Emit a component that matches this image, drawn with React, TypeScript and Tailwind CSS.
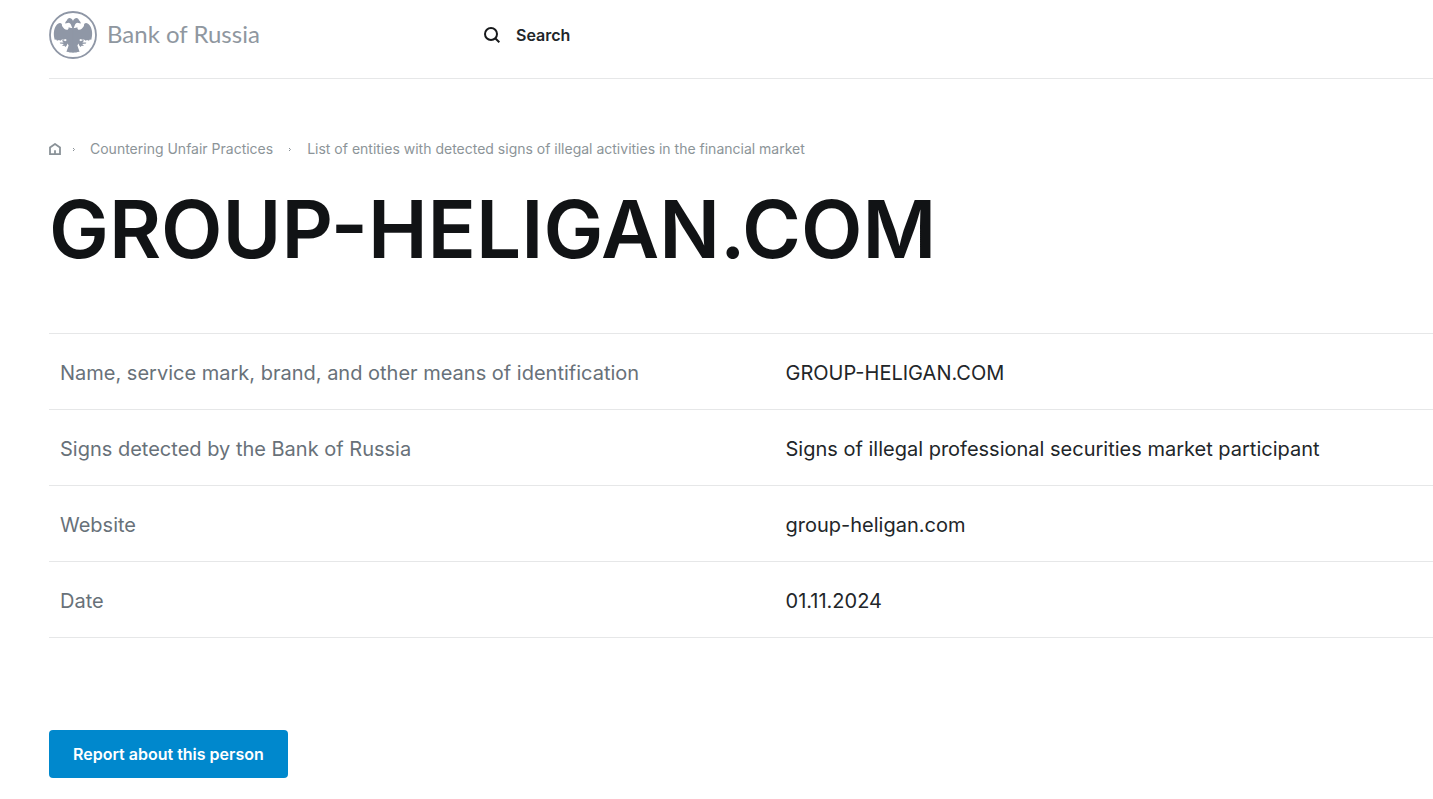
import React from "react";

const rows = [
  { label: "Name, service mark, brand, and other means of identification", value: "GROUP-HELIGAN.COM" },
  { label: "Signs detected by the Bank of Russia", value: "Signs of illegal professional securities market participant" },
  { label: "Website", value: "group-heligan.com" },
  { label: "Date", value: "01.11.2024" },
];

function Emblem() {
  const wing =
    "M24 17.2 L22.6 15.4 C22 13.6 21.4 12.2 19.8 11.8 L16.2 12.6 C16.2 11 17 10 18 9.2 C18.6 7.6 20 6.8 21.4 7.2 C23 7.6 23.8 8.8 24 10.4 L24 41.8 L22.4 41.4 L20.8 41.6 L19.4 41 L17.4 40.8 L18.6 37.6 L19.6 34.6 L18.6 32.6 L17.6 34.8 L16.4 36 L15.4 34.8 L13 35 L14.8 33 L11 32.6 L10.8 31.6 L14.6 31.4 L13 29.8 L14 29 L16.4 30.2 L17.8 29 L16.4 28 L14.6 28.8 L13 28.6 L11.4 29.8 L10 29 L8 29.8 L7.2 28.6 L5.7 28.8 C4.4 24 4.4 18.4 7.2 14.6 C8.6 12.4 11.2 11.2 12.6 12.8 C13.2 13.6 12.6 14.4 13.4 15.6 C14.2 17 16 18.8 17.8 18.8 C19.2 18.8 19.8 17.6 19.6 16.2 L21 16.8 Z";
  return (
    <svg className="size-12" viewBox="0 0 48 48" fill="#8f97a6" aria-hidden="true">
      <circle cx="24" cy="24" r="23" fill="none" stroke="#8f97a6" strokeWidth="1.8" />
      <path d={wing} />
      <path d={wing} transform="translate(48 0) scale(-1 1)" />
      <path d="M23.2 14h1.6v27h-1.6z" />
    </svg>
  );
}

function Chevron() {
  return (
    <svg className="h-[5px] w-1 shrink-0" viewBox="0 0 4 5" fill="none" stroke="#8a9298" aria-hidden="true">
      <path d="M1 1 2.5 2.5 1 4" />
    </svg>
  );
}

export default function App() {
  return (
    <div className="pl-[49px] font-['Inter',sans-serif] text-[#222629]">
      <header className="flex h-[79px] items-start border-b border-[#e6e7e8] pt-[11px]">
        <div className="flex w-[435px] shrink-0">
          <a href="#" className="flex h-12 items-center gap-[10px] font-['Lato',sans-serif] text-2xl text-[#8f97a0]">
            <Emblem />
            <span className="pb-0.5">Bank of Russia</span>
          </a>
        </div>
        <button type="button" className="flex h-12 items-center gap-4 font-['Inter',sans-serif] text-base font-semibold">
          <svg className="size-4" viewBox="0 0 16 16" fill="none" stroke="#17191b" strokeWidth="2" aria-hidden="true">
            <circle cx="7" cy="7" r="6" />
            <path d="m11.2 11.2 4.1 4.1" />
          </svg>
          <span>Search</span>
        </button>
      </header>

      <main>
        <nav aria-label="Breadcrumb" className="mt-[60px] flex h-5 items-center text-sm text-[#8c9498]">
          <a href="#" aria-label="Home">
            <svg className="size-3" viewBox="0 0 12 12" fill="none" stroke="#8a9298" strokeWidth="1.8" aria-hidden="true">
              <path d="M1 11.1V4.5L6 1l5 3.5v6.6H1Z" />
              <path d="M6 7.2V11" />
            </svg>
          </a>
          <span className="flex w-[29px] justify-center pr-1"><Chevron /></span>
          <a href="#">Countering Unfair Practices</a>
          <span className="flex w-[34px] justify-center"><Chevron /></span>
          <a href="#">List of entities with detected signs of illegal activities in the financial market</a>
        </nav>

        <h1 className="mt-[22px] text-[80px] leading-[96px] font-semibold text-[#111315]">GROUP-HELIGAN.COM</h1>

        <table className="mt-14 w-full table-fixed border-collapse text-left text-xl leading-7">
          <tbody>
            {rows.map((row) => (
              <tr key={row.label} className="h-[76px] border-y border-[#e6e7e8]">
                <th scope="row" className="w-[53%] pt-0.5 pr-4 pl-[11px] font-normal text-[#687179]">{row.label}</th>
                <td className="pt-0.5 pl-[3px]">{row.value}</td>
              </tr>
            ))}
          </tbody>
        </table>

        <button type="button" className="mt-[92px] mb-5 h-12 rounded bg-[#0088cd] px-6 text-base font-semibold text-white">
          Report about this person
        </button>
      </main>
    </div>
  );
}
